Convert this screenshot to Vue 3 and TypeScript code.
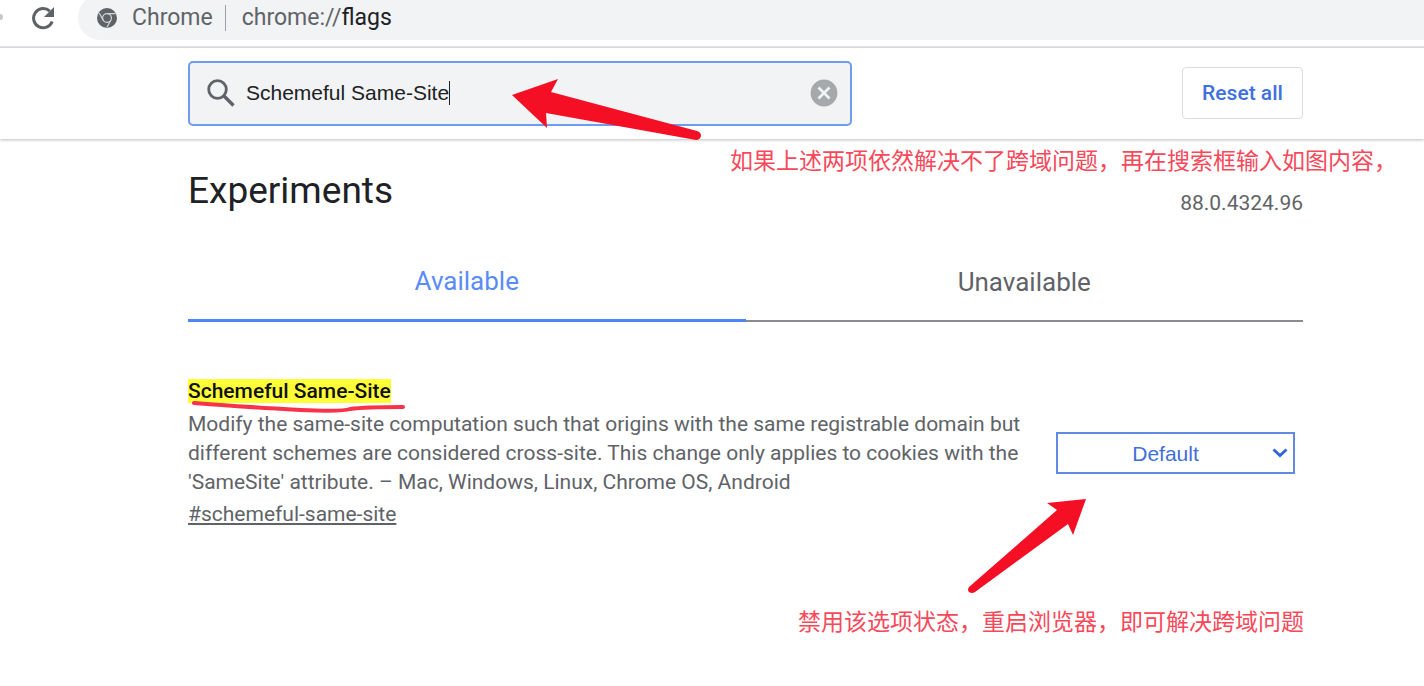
<script setup lang="ts">
import { ref } from 'vue'

const query = ref('Schemeful Same-Site')
const state = ref('Default')
const states: string[] = ['Default', 'Enabled', 'Disabled']
</script>

<template>
  <div class="page">
    <nav class="toolbar" aria-label="Browser toolbar">
      <span class="dot"></span>
      <button class="reload" type="button" aria-label="Reload">
        <svg viewBox="0 0 24 24" width="24" height="24">
          <path d="M21.2 15.5A9.600 9.600 0 1 1 18.800 5.200" fill="none" stroke="#5f6368" stroke-width="3" />
          <path d="M23 1v10H13z" fill="#5f6368" />
        </svg>
      </button>
      <div class="omnibox">
        <svg viewBox="0 0 20 20" width="20" height="20" aria-hidden="true">
          <circle cx="10" cy="10" r="10" fill="#5f6368" />
          <g fill="none" stroke="#d5d7d9" stroke-width="1.2">
            <circle cx="10" cy="10" r="4.4" />
            <path d="M10 5.6H18.500M6.200 12.2L2.200 5M13.800 12.2L9.800 19.500" />
          </g>
          <circle cx="10" cy="10" r="3.2" fill="#5f6368" />
        </svg>
        <span class="site">Chrome</span>
        <span class="rule"></span>
        <span class="url">chrome://<b>flags</b></span>
      </div>
    </nav>

    <header class="header">
      <div class="search">
        <svg class="lens" viewBox="0 0 28 28" width="28" height="28" aria-hidden="true">
          <circle cx="10.5" cy="10.5" r="8.8" fill="none" stroke="#5f6368" stroke-width="2.8" />
          <path d="M17 17l9.5 9.5" stroke="#5f6368" stroke-width="3.4" />
        </svg>
        <input v-model="query" type="text" aria-label="Search flags" spellcheck="false" />
        <span class="caret"></span>
        <button class="clear" type="button" aria-label="Clear search" @click="query = ''">
          <svg viewBox="0 0 28 28" width="28" height="28">
            <circle cx="14" cy="14" r="13.4" fill="#a6a9ab" />
            <path d="M8.5 8.5l11 11M19.5 8.5l-11 11" stroke="#f1f3f4" stroke-width="2.6" />
          </svg>
        </button>
      </div>
      <button class="reset" type="button" @click="state = 'Default'">Reset all</button>
    </header>

    <main class="content">
      <div class="title-row">
        <h1>Experiments</h1>
        <span class="version">88.0.4324.96</span>
      </div>

      <div class="tabs" role="tablist">
        <button class="tab active" type="button" role="tab" aria-selected="true">Available</button>
        <button class="tab" type="button" role="tab" aria-selected="false">Unavailable</button>
      </div>

      <section class="flag">
        <div class="info">
          <h2><mark>Schemeful Same-Site</mark></h2>
          <p>
            Modify the same-site computation such that origins with the same registrable domain but
            different schemes are considered cross-site. This change only applies to cookies with the
            'SameSite' attribute. – Mac, Windows, Linux, Chrome OS, Android
          </p>
          <a href="#schemeful-same-site">#schemeful-same-site</a>
        </div>
        <div class="picker">
          <select v-model="state" aria-label="Schemeful Same-Site state">
            <option v-for="s in states" :key="s">{{ s }}</option>
          </select>
          <svg viewBox="0 0 16 10" width="16" height="10" aria-hidden="true">
            <path d="M1.5 1.5L8 7.5l6.5-6" fill="none" stroke="#3367d6" stroke-width="3" />
          </svg>
        </div>
      </section>
    </main>

    <svg class="marks" viewBox="0 0 1424 686" width="1424" height="686" aria-hidden="true">
      <g fill="#f50f25">
        <path d="M512 95L558 79L551 92L697 131Q701 132 701 136Q700 140 696 140L546 113L547 128Z" />
        <path d="M1086 499L1047 503L1057 510L969 587Q967 590 969 592Q972 594 975 592L1068 524L1073 535Z" />
      </g>
      <path
        d="M194 403C230 406 265 408 300 410C325 411 345 411 350 409C365 407 380 407 403 407"
        fill="none"
        stroke="#f83349"
        stroke-width="4"
        stroke-linecap="round"
      />
    </svg>
    <p class="note note-search">如果上述两项依然解决不了跨域问题，再在搜索框输入如图内容，</p>
    <p class="note note-state">禁用该选项状态，重启浏览器，即可解决跨域问题</p>
  </div>
</template>

<style>
body {
  margin: 0;
  background: #fff;
}
</style>

<style scoped>
* {
  box-sizing: border-box;
}
.page {
  position: relative;
  min-height: 100vh;
  overflow: hidden;
  font-family: Roboto, 'Noto Sans CJK SC', sans-serif;
  font-size: 21px;
  color: #5f6368;
}
button {
  padding: 0;
  border: 0;
  background: none;
  font: inherit;
  color: inherit;
}
svg {
  display: block;
  flex: none;
}
h1,
h2,
p {
  margin: 0;
}
.toolbar {
  display: flex;
  height: 48px;
  border-bottom: 2px solid #e3e4e9;
}
.dot {
  width: 3px;
  height: 6px;
  margin-top: 14px;
  border-radius: 0 3px 3px 0;
  background: #c4c6c9;
}
.reload {
  height: 36px;
  margin: 0 23px 0 28px;
}
.omnibox {
  flex: 1;
  display: flex;
  align-items: center;
  height: 45px;
  margin-top: -5px;
  padding-left: 19px;
  border-radius: 22px 0 0 22px;
  background: #f1f3f4;
  font-size: 23px;
}
.site {
  margin: 0 12px 0 15px;
}
.rule {
  width: 1px;
  height: 26px;
  margin-right: 16px;
  background: #9aa0a6;
}
.url b {
  font-weight: 400;
  color: #202124;
}
.header {
  display: flex;
  align-items: center;
  justify-content: space-between;
  height: 91px;
  padding: 0 121px 1px 188px;
  box-shadow: 0 1px 3px rgba(0, 0, 0, 0.25);
}
.search {
  display: flex;
  align-items: center;
  flex: 0 1 664px;
  height: 65px;
  padding: 0 12px 0 17px;
  border: 2px solid #6f9cf3;
  border-radius: 5px;
  background: #f1f3f4;
}
.search input {
  field-sizing: content;
  min-width: 0;
  margin-left: 11px;
  padding: 0;
  border: 0;
  outline: 0;
  background: none;
  font: 21px 'Liberation Sans', sans-serif;
  color: #202124;
}
.caret {
  width: 1px;
  height: 24px;
  background: #202124;
}
.clear {
  margin-left: auto;
}
.reset {
  width: 121px;
  height: 52px;
  border: 1px solid #dadce0;
  border-radius: 4px;
  font-weight: 500;
  color: #3f70e0;
}
.content {
  padding: 26px 121px 0 188px;
}
.title-row {
  display: flex;
  justify-content: space-between;
}
h1 {
  font-size: 37px;
  line-height: 52px;
  font-weight: 400;
  color: #202124;
}
.version {
  padding-top: 24px;
  line-height: 28px;
}
.tabs {
  display: flex;
  height: 79px;
  margin-top: 26px;
}
.tab {
  flex: 1;
  border-bottom: 2px solid #8b8b90;
  font-size: 26px;
}
.tab.active {
  border-bottom: 3px solid #4f86f7;
  color: #5a8cf7;
}
.flag {
  display: flex;
  align-items: center;
  justify-content: space-between;
  margin-top: 53px;
}
.info {
  flex: 0 1 850px;
}
h2 {
  font-size: 21px;
  line-height: 32px;
  margin-bottom: 3px;
  font-weight: 500;
}
mark {
  background: #ffff38;
  color: #111;
}
.info p {
  line-height: 29px;
}
.info a {
  line-height: 34px;
  color: inherit;
}
.picker {
  position: relative;
  width: 239px;
  margin-right: 8px;
}
select {
  display: block;
  appearance: none;
  width: 100%;
  height: 42px;
  padding: 0 20px 0 0;
  border: 2px solid #5f8ce2;
  border-radius: 0;
  background: #fff;
  font: 21px 'Liberation Sans', sans-serif;
  text-align-last: center;
  color: #3f6fd8;
}
.picker svg {
  position: absolute;
  top: 16px;
  right: 7px;
  pointer-events: none;
}
.marks {
  position: absolute;
  top: 0;
  left: 0;
  pointer-events: none;
}
.note {
  position: absolute;
  font-family: 'Noto Sans CJK SC', sans-serif;
  font-size: 23px;
  line-height: 32px;
  white-space: nowrap;
  color: #f8485a;
}
.note-search {
  top: 143px;
  left: 730px;
}
.note-state {
  top: 604px;
  left: 798px;
}
</style>
